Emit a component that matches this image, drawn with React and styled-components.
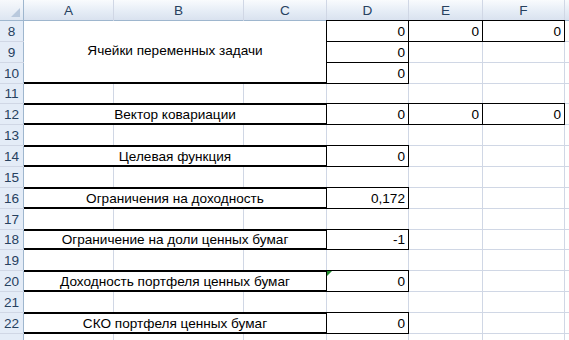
import React from "react";
import styled, { createGlobalStyle } from "styled-components";

const GlobalStyle = createGlobalStyle`
  html, body {
    margin: 0;
    padding: 0;
    background: #fff;
    overflow: hidden;
  }
  body {
    font-family: "Liberation Sans", Arial, sans-serif;
  }
`;

const Sheet = styled.div`
  display: grid;
  grid-template-columns: 23px 89px 129px 82px 81px 73px 81px 1fr;
  grid-template-rows: 20px;
  grid-auto-rows: 19.86px;
  gap: 1px;
  background: #d0d7e5;
  width: 100vw;
  height: 100vh;
  overflow: hidden;
  font-size: 13.6px;
  color: #000;
`;

const Corner = styled.div`
  background: linear-gradient(#f7f9fc, #dde6f2);
  box-shadow: 1px 0 #9eb6ce, 0 1px #9eb6ce, 1px 1px #9eb6ce;
  display: flex;
  align-items: flex-end;
  justify-content: flex-end;
  padding: 0 3px 3px 0;
`;

const CornerMark = styled.span`
  width: 0;
  height: 0;
  border-left: 9px solid transparent;
  border-bottom: 9px solid #b9c9dd;
`;

const ColHead = styled.div`
  background: linear-gradient(#f9fbfd, #e6edf6 55%, #d9e2ef);
  box-shadow: 0 1px #9eb6ce;
  color: #27415f;
  display: flex;
  align-items: center;
  justify-content: center;
  padding-top: 1px;
`;

const RowHead = styled.div`
  background: #e4ecf7;
  box-shadow: 1px 0 #9eb6ce;
  color: #27415f;
  display: flex;
  align-items: flex-end;
  justify-content: center;
  padding-bottom: 2px;
`;

const frames = {
  none: "none",
  box: "0 0 0 1px #000",
  label:
    "0 -1px #000, inset 0 1px #000, 0 1px #000, inset 0 -1px #000, 1px 0 #000, 1px 1px #000, 1px -1px #000",
  labelBottom: "0 1px #000, inset 0 -1px #000, 1px 0 #000, 1px 1px #000",
};

const Cell = styled.div`
  position: relative;
  background: #fff;
  grid-column: span ${(p) => p.$span || 1};
  grid-row: span ${(p) => p.$rows || 1};
  display: flex;
  align-items: ${(p) => (p.$middle ? "center" : "flex-end")};
  justify-content: ${(p) => (p.$align === "right" ? "flex-end" : "center")};
  padding: 0 3px 2px;
  white-space: nowrap;
  overflow: visible;
  box-shadow: ${(p) => frames[p.$frame || "none"]};
`;

// small green error mark in the corner of a cell
const ErrorMark = styled.span`
  position: absolute;
  top: 0;
  left: 0;
  width: 0;
  height: 0;
  border-top: 5px solid #1f8a2c;
  border-right: 5px solid transparent;
`;

const columns = ["A", "B", "C", "D", "E", "F", ""];

const labels = [
  { row: 12, text: "Вектор ковариации", wide: true },
  { row: 14, text: "Целевая функция", value: "0" },
  { row: 16, text: "Ограничения на доходность", value: "0,172" },
  { row: 18, text: "Ограничение на доли ценных бумаг", value: "-1" },
  { row: 20, text: "Доходность портфеля ценных бумаг", value: "0", mark: true },
  { row: 22, text: "СКО портфеля ценных бумаг", value: "0" },
];

// the row below 22 is only partly in view, so its number is left out
const EmptyRow = ({ n }) => (
  <>
    <RowHead>{n < 23 ? n : ""}</RowHead>
    {columns.map((c, i) => (
      <Cell key={i} />
    ))}
  </>
);

const LabelRow = ({ item }) => (
  <>
    <RowHead>{item.row}</RowHead>
    <Cell $span={3} $frame="label">
      {item.text}
    </Cell>
    {item.wide ? (
      <>
        <Cell $align="right" $frame="box">0</Cell>
        <Cell $align="right" $frame="box">0</Cell>
        <Cell $align="right" $frame="box">0</Cell>
      </>
    ) : (
      <>
        <Cell $align="right" $frame="box">
          {item.mark && <ErrorMark />}
          {item.value}
        </Cell>
        <Cell />
        <Cell />
      </>
    )}
    <Cell />
  </>
);

export default function App() {
  return (
    <>
      <GlobalStyle />
      <Sheet>
        <Corner>
          <CornerMark />
        </Corner>
        {columns.map((c, i) => (
          <ColHead key={i}>{c}</ColHead>
        ))}

        <RowHead>8</RowHead>
        <Cell $span={3} $rows={3} $middle $frame="labelBottom">
          Ячейки переменных задачи
        </Cell>
        <Cell $align="right" $frame="box">0</Cell>
        <Cell $align="right" $frame="box">0</Cell>
        <Cell $align="right" $frame="box">0</Cell>
        <Cell />

        <RowHead>9</RowHead>
        <Cell $align="right" $frame="box">0</Cell>
        <Cell />
        <Cell />
        <Cell />

        <RowHead>10</RowHead>
        <Cell $align="right" $frame="box">0</Cell>
        <Cell />
        <Cell />
        <Cell />

        <EmptyRow n={11} />
        {labels.map((item) => (
          <React.Fragment key={item.row}>
            <LabelRow item={item} />
            <EmptyRow n={item.row + 1} />
          </React.Fragment>
        ))}
      </Sheet>
    </>
  );
}
